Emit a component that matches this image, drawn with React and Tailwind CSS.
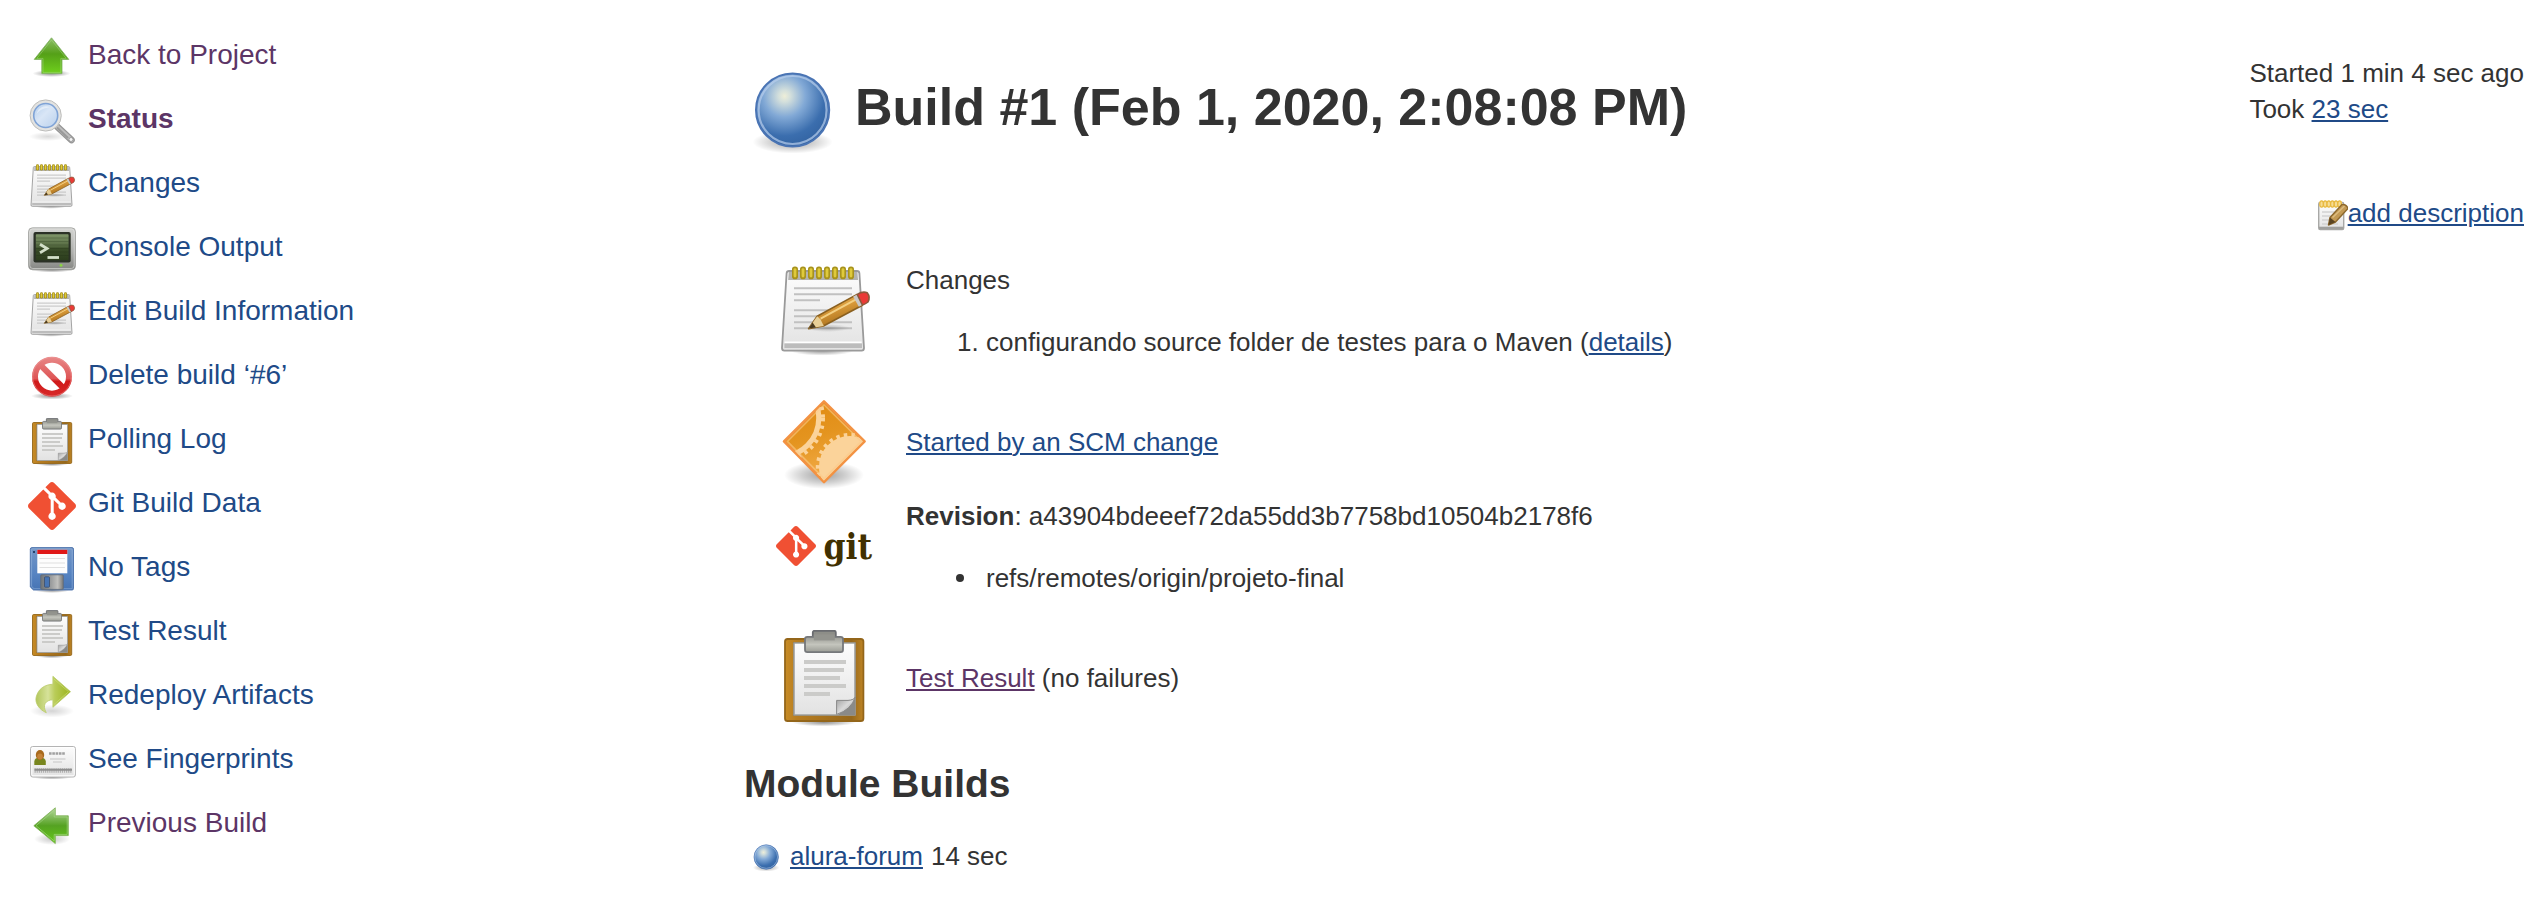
import React from "react";

const GIT_PATH =
  "M23.546 10.93L13.067.452c-.604-.603-1.582-.603-2.188 0L8.708 2.627l2.76 2.76c.645-.215 1.379-.07 1.889.441.516.515.658 1.258.438 1.9l2.658 2.66c.645-.223 1.387-.078 1.9.435.721.72.721 1.884 0 2.604-.719.719-1.881.719-2.6 0-.539-.541-.674-1.337-.404-1.996L12.86 8.955v6.525c.176.086.342.203.488.348.713.721.713 1.883 0 2.6-.719.721-1.889.721-2.609 0-.719-.719-.719-1.879 0-2.598.182-.18.387-.316.605-.406V8.835c-.217-.091-.424-.222-.6-.401-.545-.545-.676-1.342-.396-2.009L7.636 3.7.45 10.881c-.6.605-.6 1.584 0 2.189l10.48 10.477c.604.604 1.582.604 2.186 0l10.43-10.43c.605-.603.605-1.582 0-2.187";

// Gradients shared by every icon on the page.
function IconDefs() {
  return (
    <svg width="0" height="0" className="absolute" aria-hidden="true">
      <defs>
        <radialGradient id="shadow">
          <stop offset="0" stopColor="#000" stopOpacity="0.42" />
          <stop offset="0.55" stopColor="#000" stopOpacity="0.2" />
          <stop offset="1" stopColor="#000" stopOpacity="0" />
        </radialGradient>
        <linearGradient id="green-up" x1="0" y1="0" x2="0" y2="1">
          <stop offset="0" stopColor="#8fbf6a" />
          <stop offset="0.45" stopColor="#55a018" />
          <stop offset="1" stopColor="#6fd01c" />
        </linearGradient>
        <linearGradient id="green-left" x1="0" y1="0" x2="0" y2="1">
          <stop offset="0" stopColor="#b4d69c" />
          <stop offset="0.5" stopColor="#55a222" />
          <stop offset="1" stopColor="#66c91a" />
        </linearGradient>
        <linearGradient id="lens" x1="0" y1="0" x2="1" y2="1">
          <stop offset="0" stopColor="#b3cdec" />
          <stop offset="0.45" stopColor="#d9e6f6" />
          <stop offset="1" stopColor="#b9d0ec" />
        </linearGradient>
        <linearGradient id="sheet" x1="0" y1="0" x2="0" y2="1">
          <stop offset="0" stopColor="#fdfdfd" />
          <stop offset="1" stopColor="#e2e2e2" />
        </linearGradient>
        <linearGradient id="wood" x1="0" y1="0" x2="0.45" y2="1">
          <stop offset="0" stopColor="#f0ca7c" />
          <stop offset="0.5" stopColor="#d99a3a" />
          <stop offset="1" stopColor="#a56c18" />
        </linearGradient>
        <linearGradient id="casing" x1="0" y1="0" x2="0" y2="1">
          <stop offset="0" stopColor="#d4d5d2" />
          <stop offset="0.6" stopColor="#acadaa" />
          <stop offset="1" stopColor="#858683" />
        </linearGradient>
        <linearGradient id="screen" x1="0" y1="0" x2="0" y2="1">
          <stop offset="0" stopColor="#7f9669" />
          <stop offset="0.45" stopColor="#566b42" />
          <stop offset="0.55" stopColor="#3a4d28" />
          <stop offset="1" stopColor="#2c3d1d" />
        </linearGradient>
        <linearGradient id="red" gradientUnits="userSpaceOnUse" x1="0" y1="2" x2="0" y2="43">
          <stop offset="0" stopColor="#e88a8a" />
          <stop offset="0.55" stopColor="#de5555" />
          <stop offset="0.62" stopColor="#d01a1a" />
          <stop offset="1" stopColor="#d82a2a" />
        </linearGradient>
        <linearGradient id="board" x1="0" y1="0" x2="1" y2="0">
          <stop offset="0" stopColor="#c78c26" />
          <stop offset="0.15" stopColor="#b87d20" />
          <stop offset="0.85" stopColor="#96681c" />
          <stop offset="1" stopColor="#bd8323" />
        </linearGradient>
        <linearGradient id="clip" x1="0" y1="0" x2="0" y2="1">
          <stop offset="0" stopColor="#9a9b95" />
          <stop offset="0.5" stopColor="#c4c5bd" />
          <stop offset="1" stopColor="#9a9c95" />
        </linearGradient>
        <linearGradient id="fold" x1="0" y1="0" x2="1" y2="1">
          <stop offset="0" stopColor="#9b9b9b" />
          <stop offset="0.5" stopColor="#dadada" />
          <stop offset="1" stopColor="#8a8a8a" />
        </linearGradient>
        <linearGradient id="floppy" x1="0" y1="0" x2="0" y2="1">
          <stop offset="0" stopColor="#7396c6" />
          <stop offset="0.6" stopColor="#5784c2" />
          <stop offset="1" stopColor="#4674b4" />
        </linearGradient>
        <linearGradient id="metal" x1="0" y1="0" x2="1" y2="0">
          <stop offset="0" stopColor="#6f7478" />
          <stop offset="0.45" stopColor="#9a9c9d" />
          <stop offset="0.75" stopColor="#c0c0bd" />
          <stop offset="1" stopColor="#777" />
        </linearGradient>
        <linearGradient id="lime" x1="0" y1="0" x2="1" y2="0">
          <stop offset="0" stopColor="#b3c75c" />
          <stop offset="0.35" stopColor="#d6e29a" />
          <stop offset="0.55" stopColor="#b9cc58" />
          <stop offset="1" stopColor="#9ab31c" />
        </linearGradient>
        <radialGradient id="ball" cx="0.39" cy="0.31" r="0.68">
          <stop offset="0" stopColor="#eeeed8" />
          <stop offset="0.12" stopColor="#d3dfdc" />
          <stop offset="0.42" stopColor="#82a9d6" />
          <stop offset="0.8" stopColor="#3b6eae" />
          <stop offset="1" stopColor="#3465a4" />
        </radialGradient>
        <linearGradient id="amber" x1="0" y1="0" x2="0.3" y2="1">
          <stop offset="0" stopColor="#e0890f" />
          <stop offset="0.5" stopColor="#e4941f" />
          <stop offset="1" stopColor="#f2ac48" />
        </linearGradient>
        <clipPath id="diamond-clip">
          <path d="M24 4.5 43.5 23.7 24 43.2 4.8 23.7Z" />
        </clipPath>
      </defs>
    </svg>
  );
}

function Icon({ className = "size-12", children, viewBox = "0 0 48 48" }) {
  return (
    <svg viewBox={viewBox} className={`${className} shrink-0`} aria-hidden="true">
      {children}
    </svg>
  );
}

function UpIcon() {
  return (
    <Icon>
      <ellipse cx="23.5" cy="39.5" rx="19" ry="3.5" fill="url(#shadow)" />
      <path d="M23.5 3.8 40.8 25.4H34V39.6H13.8V25.4H6.2Z" fill="url(#green-up)" stroke="#7fae62" strokeWidth="0.8" strokeLinejoin="round" />
      <path d="M23.5 6 38.2 24.4H32.8V38.4H15V24.4H8.8Z" fill="none" stroke="#a6d683" strokeOpacity="0.5" />
    </Icon>
  );
}

function LeftIcon() {
  return (
    <Icon>
      <ellipse cx="24" cy="37" rx="18" ry="6" fill="url(#shadow)" opacity="0.5" />
      <path d="M5.8 23.7 27.3 5.8V13.8H40.3V33.6H27.3V41.6Z" fill="url(#green-left)" stroke="#7db056" strokeWidth="0.8" strokeLinejoin="round" />
      <path d="M8 23.7 26.2 8.4V15H39.2V32.4H26.2V39Z" fill="none" stroke="#a9d98a" strokeOpacity="0.6" />
    </Icon>
  );
}

function SearchIcon() {
  return (
    <Icon>
      <ellipse cx="20" cy="38.5" rx="19" ry="4.5" fill="url(#shadow)" opacity="0.35" />
      <path d="M28.5 28 43.5 42" stroke="#959595" strokeWidth="6.6" strokeLinecap="round" />
      <path d="M28.5 28 43.5 42" stroke="#bdbdbd" strokeWidth="4.4" strokeLinecap="round" />
      <path d="M29 29.5 40 40" stroke="#999" strokeWidth="2" />
      <circle cx="43" cy="41.5" r="2" fill="#f4f4f4" stroke="#8a8a8a" strokeWidth="0.7" />
      <circle cx="17.7" cy="17.5" r="15.6" fill="#e3e3e1" stroke="#bdbdbb" strokeWidth="1" />
      <circle cx="17.7" cy="17.5" r="12" fill="url(#lens)" stroke="#7fa3d6" strokeWidth="1.6" />
      <path d="M8.6 16A9.4 9.4 0 0 1 22 9.2C14.5 10 11 13 8.6 16Z" fill="#fff" opacity="0.45" />
    </Icon>
  );
}

function NotepadIcon({ className }) {
  return (
    <Icon className={className}>
      <ellipse cx="23" cy="44.3" rx="16" ry="2.5" fill="url(#shadow)" />
      <path d="M6.5 4.5H40.5Q41.6 4.5 41.7 5.7L44 43Q44 44.3 42.8 44.3H4.2Q3 44.3 3 43L5.3 5.7Q5.4 4.5 6.5 4.5Z" fill="url(#sheet)" stroke="#9a9a9a" strokeWidth="0.9" />
      <path d="M6.4 5H40.7L41 9H6.1Z" fill="#b3b3b1" />
      <path d="M4.2 40.8H43V43H4.2Z" fill="#bcbcbc" />
      <path d="M4.3 40.1H42.8" stroke="#fff" strokeWidth="0.8" />
      <path d="M9 13.1H38M9 16.1H38M9 19.1H22M9 24.1H33M9 27.1H28M9 30.1H38M9 33.1H38" stroke="#c1c1c1" strokeWidth="1" />
      {[9.5, 13.5, 17.5, 21.5, 25.5, 29.5, 33.5, 37.5].map((x) => (
        <g key={x}>
          <rect x={x - 1.5} y="2.2" width="3" height="6.4" rx="1.4" fill="#a8931c" />
          <rect x={x - 0.7} y="3.1" width="1.4" height="4.6" rx="0.7" fill="#dfca3c" />
        </g>
      ))}
      <ellipse cx="26" cy="33" rx="11" ry="2" fill="url(#shadow)" opacity="0.5" />
      <path d="M16.3 33.3 20.6 27.1 40.3 16.3 43.2 21.6 23.7 32Z" fill="url(#wood)" stroke="#8a6020" strokeWidth="0.8" strokeLinejoin="round" />
      <path d="M16.3 33.3 20.6 27.1 22.3 28.8 23.9 32Z" fill="#e8cf97" />
      <path d="M16.3 33.3 18.3 30.3 20 32.7Z" fill="#4a3a20" />
      <path d="M22.3 28.3 40.9 18.2" stroke="#f3cf82" strokeWidth="1" />
      <path d="M38.6 17.3 40.8 16.1 43.4 21.4 41.4 22.4Z" fill="#c9c9c9" />
      <path d="M40.6 16.2Q43.5 14.4 45.6 15.4 47.3 17.5 46 20 44.8 21 43.2 21.5Z" fill="#ea3a36" stroke="#8c5a3c" strokeWidth="0.8" />
    </Icon>
  );
}

function TerminalIcon() {
  return (
    <Icon>
      <ellipse cx="24" cy="44" rx="20" ry="2.5" fill="url(#shadow)" />
      <rect x="0.5" y="1.8" width="47" height="42" rx="4" fill="url(#casing)" stroke="#9d9e9b" strokeWidth="0.8" />
      <rect x="1.8" y="3" width="44.4" height="39.5" rx="3" fill="none" stroke="#e4e5e2" strokeOpacity="0.6" />
      <rect x="5.5" y="6" width="37.2" height="30.5" rx="2" fill="#2b3126" />
      <rect x="7.8" y="8.3" width="32.8" height="26" rx="0.8" fill="url(#screen)" />
      <path d="M8 12H40.5M8 15.5H40.5M8 19H40.5M8 22.5H40.5M8 26H40.5M8 29.5H40.5" stroke="#1d2b12" strokeOpacity="0.25" />
      <path d="M12 18.3 19 22.6 12 26.8" fill="none" stroke="#d2dfc8" strokeWidth="2.8" />
      <path d="M19.5 31.5H31" stroke="#d2dfc8" strokeWidth="2.8" />
      <circle cx="33" cy="39.2" r="1.5" fill="#8ad244" />
    </Icon>
  );
}

function NoEntryIcon() {
  return (
    <Icon>
      <ellipse cx="24" cy="42" rx="21" ry="3.5" fill="url(#shadow)" />
      <circle cx="24" cy="22.7" r="17" fill="#fff" fillOpacity="0.8" stroke="url(#red)" strokeWidth="6" />
      <path d="M12 10.7 36 34.7" stroke="url(#red)" strokeWidth="6" />
      <circle cx="24" cy="22.7" r="19.3" fill="none" stroke="#f0a0a0" strokeOpacity="0.6" strokeWidth="0.8" />
    </Icon>
  );
}

function ClipboardIcon({ className }) {
  return (
    <Icon className={className}>
      <ellipse cx="24" cy="46.2" rx="16" ry="2" fill="url(#shadow)" />
      <rect x="4.5" y="4.5" width="39.2" height="41" rx="1.3" fill="url(#board)" stroke="#94661a" strokeWidth="0.9" />
      <rect x="8.5" y="6" width="31.5" height="37" fill="#8b6018" />
      <path d="M9 6.5H39.5V42.5H9Z" fill="url(#sheet)" stroke="#a0a19f" strokeWidth="0.8" />
      <path d="M14 16H35M14 20H34M14 24H32M14 28H35M14 32H27" stroke="#cbcbc9" strokeWidth="1.9" />
      <path d="M39.5 34.5 31 42.5H39.5Z" fill="#8a8a88" />
      <path d="M30.3 35.2H36Q39 35 39.7 33.5 37.5 40 30.3 42.2Z" fill="url(#fold)" stroke="#888" strokeWidth="0.5" />
      <rect x="18.4" y="0.4" width="11.5" height="6" rx="0.8" fill="#8d8e88" stroke="#6a6c70" strokeWidth="0.9" />
      <rect x="14.5" y="3.4" width="19" height="7.7" rx="1.2" fill="url(#clip)" stroke="#76787b" strokeWidth="0.9" />
      <rect x="18.9" y="2.2" width="10.5" height="3" fill="#93948e" />
    </Icon>
  );
}

function GitIcon({ className }) {
  return (
    <Icon className={className} viewBox="0 0 24 24">
      <path d={GIT_PATH} fill="#f05033" />
    </Icon>
  );
}

function FloppyIcon() {
  return (
    <Icon>
      <ellipse cx="24" cy="44.5" rx="17" ry="2.5" fill="url(#shadow)" />
      <path d="M4 1.6H44Q45.5 1.6 45.5 3.1V42.5Q45.5 44 44 44H5.5L2.3 41V3.1Q2.3 1.6 4 1.6Z" fill="url(#floppy)" stroke="#4a70aa" strokeWidth="0.9" />
      <path d="M4.5 2.9H43.3Q44.2 2.9 44.2 3.9V42.7H6L3.6 40.4V3.9Q3.6 2.9 4.5 2.9Z" fill="none" stroke="#a3bfe4" strokeOpacity="0.6" strokeWidth="0.8" />
      <rect x="9.3" y="3.8" width="30" height="23.5" fill="#fdfdfd" />
      <rect x="9.3" y="3.8" width="30" height="4.2" fill="#e01818" />
      <path d="M11.5 12.5H37M11.5 17H37M11.5 21.5H37" stroke="#e0e0e0" strokeWidth="1.2" />
      <rect x="5" y="5" width="2" height="2" fill="#27426d" />
      <rect x="12.7" y="28.8" width="22.6" height="14.6" rx="1" fill="url(#metal)" stroke="#5f6a7a" strokeWidth="0.8" />
      <rect x="16.5" y="30.8" width="5" height="10.4" rx="0.8" fill="#4674b4" stroke="#3a4d6c" strokeWidth="0.8" />
    </Icon>
  );
}

function RedoIcon() {
  return (
    <Icon>
      <ellipse cx="24" cy="37" rx="22" ry="6.5" fill="url(#shadow)" opacity="0.4" />
      <path d="M24.9 2.3 42.5 17.7 24.9 33.3V25.8C17.5 26 14 31 18.3 38.7 11 35.5 6.7 29 8.2 23 10.2 14.8 16.5 10.7 24.9 10.2Z" fill="url(#lime)" stroke="#b9ca68" strokeWidth="0.8" strokeLinejoin="miter" />
      <path d="M26 5 40.5 17.7 26 30.5" fill="none" stroke="#d8e690" strokeOpacity="0.5" strokeWidth="1" />
    </Icon>
  );
}

function CardIcon() {
  return (
    <Icon>
      <ellipse cx="24" cy="39.3" rx="20" ry="2.2" fill="url(#shadow)" />
      <rect x="2.6" y="8.5" width="44.8" height="30.5" rx="2" fill="url(#sheet)" stroke="#b4b4b4" strokeWidth="1" />
      <rect x="3.8" y="9.7" width="42.4" height="28.1" rx="1.2" fill="none" stroke="#fff" strokeWidth="1" />
      <path d="M6.3 27V23.5Q6.5 19.5 12 19.5T17.8 23.5V27Z" fill="#78861f" />
      <ellipse cx="12" cy="17" rx="4.2" ry="5" fill="#a8691c" />
      <ellipse cx="12" cy="18.5" rx="2.8" ry="3" fill="#c48338" />
      <path d="M21 15.5H37.5" stroke="#a0a0a0" strokeWidth="2.6" strokeDasharray="2.6 0.7" />
      <path d="M22 21H37.5M25 24H34" stroke="#d4d4d4" strokeWidth="1.4" />
      <path d="M6.5 32.5H44" stroke="#b0b0b0" strokeWidth="4.6" strokeDasharray="1.3 0.8" />
      <path d="M6.5 31.8H44" stroke="#8f8f8f" strokeWidth="2" />
    </Icon>
  );
}

function BallIcon({ className }) {
  return (
    <Icon className={className}>
      <ellipse cx="24.3" cy="41.5" rx="20" ry="5.8" fill="url(#shadow)" opacity="0.85" />
      <circle cx="24.3" cy="25.5" r="18.3" fill="url(#ball)" stroke="#4a74b4" strokeWidth="1" />
      <circle cx="24.3" cy="25.5" r="17" fill="none" stroke="#b9cfec" strokeOpacity="0.7" strokeWidth="1.1" />
    </Icon>
  );
}

function ScmIcon() {
  return (
    <Icon className="size-24">
      <ellipse cx="24" cy="40.5" rx="20" ry="7" fill="url(#shadow)" opacity="0.9" />
      <path d="M24 3.7 44.3 23.7 24 44 4 23.7Z" fill="url(#amber)" stroke="#f39243" strokeWidth="1.3" strokeLinejoin="round" />
      <g clipPath="url(#diamond-clip)" fill="none" stroke="#fbd39a">
        <circle cx="2" cy="12" r="19.4" strokeWidth="2.6" />
        <circle cx="2" cy="12" r="21.5" strokeWidth="2" strokeDasharray="1.7 2.1" />
        <circle cx="37" cy="36.5" r="15" fill="#fbd39a" />
        <circle cx="37" cy="36.5" r="16" strokeWidth="2.2" strokeDasharray="1.7 2.1" />
      </g>
      <path d="M24 5.4 42.6 23.7 24 42.3 5.7 23.7Z" fill="none" stroke="#fcc98a" strokeOpacity="0.6" strokeWidth="0.8" />
    </Icon>
  );
}

function EditNoteIcon() {
  return (
    <Icon className="size-8" viewBox="0 0 32 32">
      <rect x="2.7" y="3.5" width="25" height="27" rx="1.5" fill="url(#sheet)" stroke="#a8a8a6" strokeWidth="1.4" />
      <path d="M3 29H27.5" stroke="#a0a09e" strokeWidth="2.6" />
      <path d="M6 13H22M6 17H20M6 21H17M6 25H22" stroke="#d2d2d2" strokeWidth="1.3" />
      <rect x="3.5" y="2.5" width="22.500" height="5" fill="#f3d27c" />
      {[5.6, 9.2, 12.8, 16.4, 20, 23.6].map((x) => (
        <ellipse key={x} cx={x} cy="5" rx="1.8" ry="3.2" fill="#f6dc94" stroke="#e8b93f" strokeWidth="1.2" />
      ))}
      <path d="M12.5 26 14 18.5 26 5.5Q30.5 5 32 9.500L19.5 23Z" fill="#c39a55" stroke="#8d682c" strokeWidth="1.4" strokeLinejoin="round" />
      <path d="M12.5 26 14 18.5 19.5 23Z" fill="#5a4422" />
      <path d="M16.5 18.5 28.500 7" stroke="#dcbc7e" strokeWidth="1.6" />
    </Icon>
  );
}

const LINK = "text-[#204a87]";
const VISITED = "text-[#5c3566]";
const UNDERLINE = "underline decoration-2 underline-offset-2";

const tasks = [
  { label: "Back to Project", icon: <UpIcon />, style: VISITED },
  { label: "Status", icon: <SearchIcon />, style: `${VISITED} font-bold`, current: true },
  { label: "Changes", icon: <NotepadIcon />, style: LINK },
  { label: "Console Output", icon: <TerminalIcon />, style: LINK },
  { label: "Edit Build Information", icon: <NotepadIcon />, style: LINK },
  { label: "Delete build ‘#6’", icon: <NoEntryIcon />, style: LINK },
  { label: "Polling Log", icon: <ClipboardIcon />, style: LINK },
  { label: "Git Build Data", icon: <GitIcon />, style: LINK },
  { label: "No Tags", icon: <FloppyIcon />, style: LINK },
  { label: "Test Result", icon: <ClipboardIcon />, style: LINK },
  { label: "Redeploy Artifacts", icon: <RedoIcon />, style: LINK },
  { label: "See Fingerprints", icon: <CardIcon />, style: LINK },
  { label: "Previous Build", icon: <LeftIcon />, style: VISITED },
];

function SummaryRow({ icon, centered, children }) {
  return (
    <section className="flex gap-[34px]">
      {icon}
      <div className={centered ? "self-center" : ""}>{children}</div>
    </section>
  );
}

export default function App() {
  return (
    <div className='flex bg-white font-["Liberation_Sans",Arial,sans-serif] text-[26px] leading-9 text-[#333]'>
      <IconDefs />
      <nav aria-label="Build" className="w-[744px] shrink-0 pt-[34px] pl-7">
        <ul className="flex flex-col gap-4">
          {tasks.map((task) => (
            <li key={task.label}>
              <a
                href="#"
                aria-current={task.current ? "page" : undefined}
                className={`flex w-fit gap-3 text-[28px] leading-[42px] ${task.style}`}
              >
                {task.icon}
                {task.label}
              </a>
            </li>
          ))}
        </ul>
      </nav>

      <main className="min-w-0 grow pt-[55px] pr-[14px]">
        <header className="flex items-start justify-between">
          <h1 className="flex items-center gap-[15px] pt-1 text-[52px] leading-none font-bold">
            <BallIcon className="size-24" />
            Build #1 (Feb 1, 2020, 2:08:08 PM)
          </h1>
          <div className="flex flex-col items-end gap-[68px]">
            <div>
              <p>Started 1 min 4 sec ago</p>
              <p>
                Took <a href="#" className={`${LINK} ${UNDERLINE}`}>23 sec</a>
              </p>
            </div>
            <a href="#" className={`flex items-end ${LINK}`}>
              <EditNoteIcon />
              <span className={UNDERLINE}>add description</span>
            </a>
          </div>
        </header>

        <div className="mt-[31px] flex flex-col gap-2 pl-8">
          <SummaryRow icon={<NotepadIcon className="size-24" />}>
            <p>Changes</p>
            <ol className="my-[26px] list-decimal pl-20">
              <li>
                configurando source folder de testes para o Maven (
                <a href="#" className={`${LINK} ${UNDERLINE}`}>details</a>)
              </li>
            </ol>
          </SummaryRow>

          <SummaryRow icon={<ScmIcon />} centered>
            <a href="#" className={`${LINK} ${UNDERLINE}`}>Started by an SCM change</a>
          </SummaryRow>

          <SummaryRow
            icon={
              <div className="flex size-24 shrink-0 items-center justify-between">
                <GitIcon className="size-10" />
                <span className='font-["DejaVu_Serif_Condensed","DejaVu_Serif",serif] text-[35px] leading-none font-bold text-[#413000]'>
                  git
                </span>
              </div>
            }
          >
            <p>
              <b>Revision</b>: a43904bdeeef72da55dd3b7758bd10504b2178f6
            </p>
            <ul className="my-[26px] pl-[50px]">
              <li className="flex items-center gap-[22px] before:size-2 before:rounded-full before:bg-[#333]">
                refs/remotes/origin/projeto-final
              </li>
            </ul>
          </SummaryRow>

          <SummaryRow icon={<ClipboardIcon className="size-24" />} centered>
            <a href="#" className={`${VISITED} ${UNDERLINE}`}>Test Result</a> (no failures)
          </SummaryRow>
        </div>

        <h2 className="mt-9 text-[39px] leading-[44px] font-bold">Module Builds</h2>
        <ul className="mt-8 pl-[6px]">
          <li className="flex items-center gap-2">
            <BallIcon className="size-8" />
            <a href="#" className={`${LINK} ${UNDERLINE}`}>alura-forum</a>
            <span>14 sec</span>
          </li>
        </ul>
      </main>
    </div>
  );
}
